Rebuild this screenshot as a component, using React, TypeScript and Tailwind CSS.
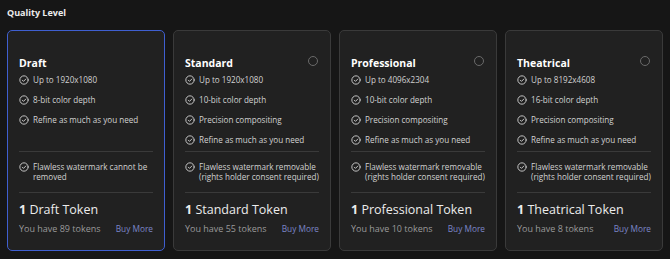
import React from "react";

type Tier = {
  name: string;
  features: string[];
  watermark: string[];
  tokens: number;
  selected?: boolean;
};

const tiers: Tier[] = [
  {
    name: "Draft",
    features: ["Up to 1920x1080", "8-bit color depth", "Refine as much as you need"],
    watermark: ["Flawless watermark cannot be", "removed"],
    tokens: 89,
    selected: true,
  },
  {
    name: "Standard",
    features: [
      "Up to 1920x1080",
      "10-bit color depth",
      "Precision compositing",
      "Refine as much as you need",
    ],
    watermark: ["Flawless watermark removable", "(rights holder consent required)"],
    tokens: 55,
  },
  {
    name: "Professional",
    features: [
      "Up to 4096x2304",
      "10-bit color depth",
      "Precision compositing",
      "Refine as much as you need",
    ],
    watermark: ["Flawless watermark removable", "(rights holder consent required)"],
    tokens: 10,
  },
  {
    name: "Theatrical",
    features: [
      "Up to 8192x4608",
      "16-bit color depth",
      "Precision compositing",
      "Refine as much as you need",
    ],
    watermark: ["Flawless watermark removable", "(rights holder consent required)"],
    tokens: 8,
  },
];

const CheckCircle = () => (
  <svg
    width="10"
    height="10"
    viewBox="0 0 24 24"
    fill="none"
    stroke="currentColor"
    strokeWidth="2.2"
    strokeLinecap="round"
    strokeLinejoin="round"
    className="shrink-0"
  >
    <circle cx="12" cy="12" r="10" />
    <path d="m8 12.5 2.8 2.8L16.5 9.5" />
  </svg>
);

const Feature = ({ lines }: { lines: string[] }) => (
  <div className="flex items-start gap-[4px]">
    <div className="text-[#d0d0d0]">
      <CheckCircle />
    </div>
    <div className="whitespace-nowrap text-[8.1px] leading-[10px] text-[#d2d2d2]">
      {lines.map((l) => (
        <div key={l}>{l}</div>
      ))}
    </div>
  </div>
);

const TierCard = ({ tier }: { tier: Tier }) => (
  <div
    className={`flex h-[221px] flex-col rounded-[5px] border bg-[#212121] px-[11px] ${
      tier.selected ? "border-[#3f5fd0]" : "border-[#3a3a3a]"
    }`}
  >
    <div className="flex h-[37px] items-end justify-between">
      <span className="text-[10.5px] font-bold leading-none text-white">{tier.name}</span>
      {!tier.selected && (
        <span className="mb-[2px] mr-[1px] size-[10px] rounded-full border border-[#6a6a6a]" />
      )}
    </div>
    <div className="mt-[2px] flex h-[80px] flex-col">
      {tier.features.map((f) => (
        <div key={f} className="flex h-[20px] items-center">
          <Feature lines={[f]} />
        </div>
      ))}
    </div>
    <div className="mt-[1px] border-t border-[#3a3a3a] pt-[10px]">
      <div className="h-[30px]">
        <Feature lines={tier.watermark} />
      </div>
    </div>
    <div className="border-t border-[#3a3a3a] pt-[9px]">
      <div className="text-[12.5px] leading-[16px] text-[#ececec]">
        <span className="font-bold">1</span> {tier.name} Token
      </div>
      <div className="mt-[5px] flex items-baseline justify-between leading-[11px]">
        <span className="text-[9px] text-[#9a9a9a]">You have {tier.tokens} tokens</span>
        <span className="text-[8.3px] text-[#7c86c8]">Buy More</span>
      </div>
    </div>
  </div>
);

export default function App() {
  return (
    <div
      className="h-[259px] w-[670px] bg-[#161616] px-[7px] pt-[7px]"
      style={{ fontFamily: '"Open Sans", "Noto Sans", sans-serif' }}
    >
      <h2 className="text-[9px] font-bold leading-[12px] text-[#ececec]">Quality Level</h2>
      <div className="mt-[11px] grid grid-cols-4 gap-[8px]">
        {tiers.map((t) => (
          <TierCard key={t.name} tier={t} />
        ))}
      </div>
    </div>
  );
}
